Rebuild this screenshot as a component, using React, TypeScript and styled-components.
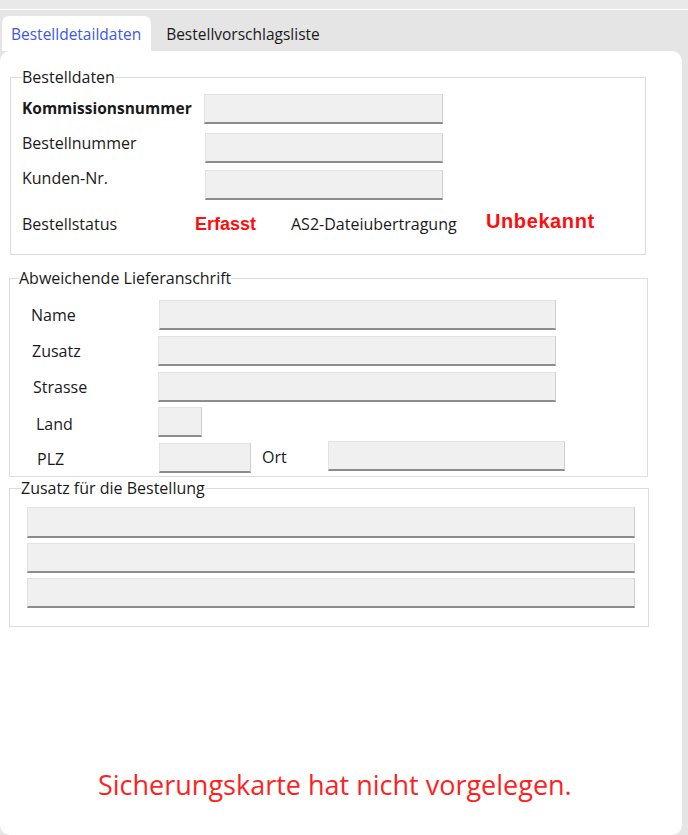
import styled, { createGlobalStyle } from 'styled-components';

const GlobalStyle = createGlobalStyle`
  html, body {
    margin: 0;
    padding: 0;
    background: #e5e5e5;
  }
  body {
    font-family: 'Open Sans', 'Noto Sans', sans-serif;
    color: #1a1a1a;
  }
`;

const Page = styled.div`
  width: 688px;
  height: 835px;
  display: flex;
  flex-direction: column;
  overflow: hidden;
  background: #e5e5e5;
`;

const TopStrip = styled.div`
  height: 9px;
  flex: none;
  background: #e9e9e9;
  border-bottom: 1px solid #ffffff;
`;

const TabBar = styled.div`
  display: flex;
  align-items: stretch;
  gap: 6px;
  height: 35px;
  margin-top: 6px;
  padding-left: 2px;
  flex: none;
`;

const Tab = styled.div<{ $active?: boolean }>`
  display: flex;
  align-items: center;
  padding: 0 10px 0 9px;
  font-size: 15.5px;
  border-radius: 7px 7px 0 0;
  background: ${({ $active }) => ($active ? '#ffffff' : 'transparent')};
  color: ${({ $active }) => ($active ? '#4157e4' : '#1a1a1a')};
`;

const Panel = styled.div`
  flex: 1;
  margin-right: 6px;
  background: #ffffff;
  border-radius: 10px;
  padding-top: 17px;
  display: flex;
  flex-direction: column;
  align-items: flex-start;
`;

const Group = styled.fieldset<{ $left: number; $width: number; $pad: string; $mt?: number }>`
  box-sizing: border-box;
  width: ${({ $width }) => $width}px;
  margin: ${({ $mt }) => $mt ?? 0}px 0 0 ${({ $left }) => $left}px;
  padding: ${({ $pad }) => $pad};
  border: 1px solid #dddddd;
  min-width: 0;
`;

const Legend = styled.legend`
  padding: 0;
  font-size: 16px;
  line-height: 18px;
  color: #1a1a1a;
`;

const Row = styled.div<{ $mt?: number; $h?: number; $center?: boolean }>`
  display: flex;
  align-items: ${({ $center }) => ($center ? 'center' : 'flex-start')};
  height: ${({ $h }) => ($h ? `${$h}px` : 'auto')};
  margin-top: ${({ $mt }) => $mt ?? 0}px;
`;

const Label = styled.div<{ $w: number; $dy?: number; $indent?: number; $bold?: boolean }>`
  flex: none;
  box-sizing: border-box;
  width: ${({ $w }) => $w}px;
  padding-left: ${({ $indent }) => $indent ?? 0}px;
  margin-top: ${({ $dy }) => $dy ?? 0}px;
  font-size: ${({ $bold }) => ($bold ? 15.5 : 16)}px;
  line-height: 20px;
  font-weight: ${({ $bold }) => ($bold ? 700 : 400)};
  white-space: nowrap;
`;

const Field = styled.div<{ $w: number; $h?: number; $ml?: number; $dy?: number }>`
  flex: none;
  box-sizing: border-box;
  width: ${({ $w }) => $w}px;
  height: ${({ $h }) => $h ?? 30}px;
  margin-left: ${({ $ml }) => $ml ?? 0}px;
  margin-top: ${({ $dy }) => $dy ?? 0}px;
  background: #f0f0f0;
  border-top: 1px solid #e2e2e2;
  border-left: 1px solid #e2e2e2;
  border-right: 1px solid #cfcfcf;
  border-bottom: 2px solid #8c8c8c;
`;

const Status = styled.div<{ $w?: number; $size?: number; $lift?: number }>`
  flex: none;
  width: ${({ $w }) => ($w ? `${$w}px` : 'auto')};
  font-family: 'Liberation Sans', Arial, sans-serif;
  font-weight: 700;
  font-size: ${({ $size }) => $size ?? 18}px;
  line-height: 21px;
  letter-spacing: ${({ $size }) => (($size ?? 18) > 18 ? '0.6px' : '0')};
  color: #ff0d0d;
  margin-bottom: ${({ $lift }) => $lift ?? 0}px;
`;

const Text = styled.div<{ $w: number }>`
  flex: none;
  width: ${({ $w }) => $w}px;
  font-size: 16px;
  line-height: 20px;
  white-space: nowrap;
`;

const Stack = styled.div`
  display: flex;
  flex-direction: column;
  gap: 5px;
  margin-left: 6px;
`;

const Notice = styled.div`
  margin: 140px 0 0 98px;
  font-size: 27px;
  line-height: 36px;
  color: #ff1f1f;
  white-space: nowrap;
`;

export default function App() {
  return (
    <>
      <GlobalStyle />
      <Page>
        <TopStrip />
        <TabBar>
          <Tab $active>Bestelldetaildaten</Tab>
          <Tab>Bestellvorschlagsliste</Tab>
        </TabBar>
        <Panel>
          <Group $left={10} $width={636} $pad="8px 11px 18px">
            <Legend>Bestelldaten</Legend>
            <Row>
              <Label $w={182} $dy={4} $bold>Kommissionsnummer</Label>
              <Field $w={239} />
            </Row>
            <Row $mt={9}>
              <Label $w={183}>Bestellnummer</Label>
              <Field $w={238} />
            </Row>
            <Row $mt={7}>
              <Label $w={183} $dy={-2}>Kunden-Nr.</Label>
              <Field $w={238} />
            </Row>
            <Row $mt={12} $h={24} $center>
              <Text $w={173}>Bestellstatus</Text>
              <Status $w={96}>Erfasst</Status>
              <Text $w={195}>AS2-Dateiubertragung</Text>
              <Status $size={20} $lift={6}>Unbekannt</Status>
            </Row>
          </Group>

          <Group $left={9} $width={639} $pad="13px 9px 3px" $mt={14}>
            <Legend>Abweichende Lieferanschrift</Legend>
            <Row>
              <Label $w={140} $indent={12} $dy={5}>Name</Label>
              <Field $w={397} />
            </Row>
            <Row $mt={6}>
              <Label $w={139} $indent={13} $dy={5}>Zusatz</Label>
              <Field $w={398} />
            </Row>
            <Row $mt={6}>
              <Label $w={139} $indent={14} $dy={5}>Strasse</Label>
              <Field $w={398} />
            </Row>
            <Row $mt={5}>
              <Label $w={139} $indent={17} $dy={7}>Land</Label>
              <Field $w={44} />
            </Row>
            <Row $mt={6}>
              <Label $w={140} $indent={18} $dy={6}>PLZ</Label>
              <Field $w={92} />
              <Label $w={77} $indent={11} $dy={4}>Ort</Label>
              <Field $w={237} $dy={-2} />
            </Row>
          </Group>

          <Group $left={9} $width={640} $pad="10px 11px 18px" $mt={2}>
            <Legend>Zusatz für die Bestellung</Legend>
            <Stack>
              <Field $w={608} $h={31} />
              <Field $w={608} />
              <Field $w={608} />
            </Stack>
          </Group>

          <Notice>Sicherungskarte hat nicht vorgelegen.</Notice>
        </Panel>
      </Page>
    </>
  );
}
